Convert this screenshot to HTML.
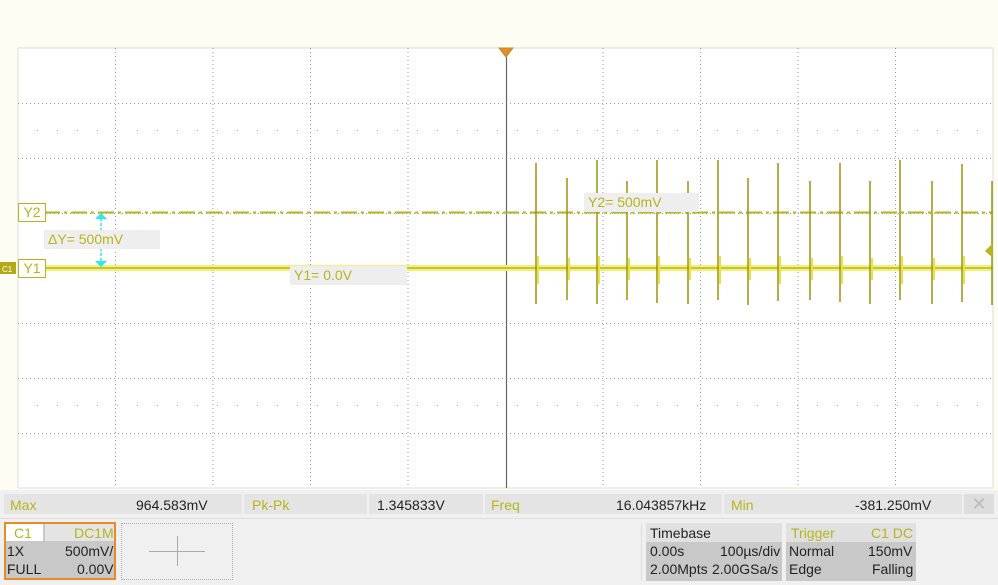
<!DOCTYPE html>
<html><head><meta charset="utf-8"><style>
body{margin:0;width:998px;height:585px;background:#fdfdf3;font-family:"Liberation Sans",sans-serif;position:relative;overflow:hidden}
.a{position:absolute;font-size:13px;line-height:16px}
.y{color:#b5b51e}
.k{color:#222}
</style></head><body>
<svg width="998" height="490" style="position:absolute;left:0;top:0">
<rect x="18" y="48" width="975" height="440" fill="#fff" stroke="#ddd"/>
<g stroke="#999" stroke-dasharray="1,3" stroke-width="1">
<path d="M115.5 48V488M213 48V488M310.5 48V488M408 48V488M603 48V488M700.5 48V488M798 48V488M895.5 48V488"/>
<path d="M18 103.5H993M18 158.5H993M18 213.5H993M18 323.5H993M18 378.5H993M18 433.5H993"/>
</g>
<g stroke="#aaa" stroke-dasharray="1,19" stroke-width="1">
<path d="M37 130.5H993M37 405.5H993"/>
</g>
<path d="M506.5 56V488" stroke="#666" stroke-width="1.2"/>
<path d="M499 48L513 48L506 57Z" fill="#e8892a" stroke="#a89a20"/>
<path d="M44 212.5H993" stroke="#b5b51e" stroke-width="2" stroke-dasharray="16,4,3,4"/>
<rect x="18" y="265" width="975" height="6" fill="#f4f07a"/>
<path d="M18 268H993" stroke="#b5b51e" stroke-width="1.5"/>
<g stroke="#9a940e" stroke-width="1.5">
<path d="M536 163V304M567 178V300M597 160V304M627 181V300M657 160V303M688 181V304M718 160V300M748 178V305M778 163V301M810 181V300M840 163V302M870 181V304M900 160V300M932 181V304M962 164V302M992 181V305"/>
</g>
<g stroke="#e8e24a" stroke-width="2">
<path d="M538 256V284M569 258V280M599 256V284M629 258V280M659 256V284M690 258V280M720 256V284M750 258V280M780 256V284M812 258V280M842 256V284M872 258V280M902 256V284M934 258V280M964 256V284"/>
</g>
<path d="M993 243L985 251L993 258Z" fill="#b5b51e"/>
<path d="M101 218V262" stroke="#2de6ef" stroke-width="1.5" stroke-dasharray="3,2"/>
<path d="M95 219H107L101 213ZM95 261H107L101 267Z" fill="#2de6ef"/>
<rect x="0" y="262" width="16" height="12" fill="#b5a814"/>
<text x="2" y="272" font-size="8" fill="#fff" font-family="Liberation Sans">C1</text>
</svg>
<div class="a y" style="left:18px;top:203px;width:26px;height:17px;border:1px solid #b5b51e;background:#fff;text-align:center;font-size:14px">Y2</div>
<div class="a y" style="left:18px;top:259px;width:26px;height:17px;border:1px solid #b5b51e;background:#fff;text-align:center;font-size:14px">Y1</div>
<div class="a y" style="left:44px;top:230px;width:116px;height:19px;background:#eee;font-size:14px;line-height:19px;padding-left:4px;box-sizing:border-box">ΔY= 500mV</div>
<div class="a y" style="left:290px;top:266px;width:117px;height:19px;background:#eee;font-size:14px;line-height:19px;padding-left:4px;box-sizing:border-box">Y1= 0.0V</div>
<div class="a y" style="left:584px;top:193px;width:115px;height:19px;background:#eee;font-size:14px;line-height:19px;padding-left:4px;box-sizing:border-box">Y2= 500mV</div>
<div style="position:absolute;left:0;top:490px;width:998px;height:95px;background:#f0f0f0"></div>
<div style="position:absolute;left:4px;top:494px;width:990px;height:20px;background:#e4e4e4"></div>
<div class="a y" style="left:10px;top:497px;font-size:14px">Max</div>
<div class="a k" style="left:136px;top:497px;font-size:14px">964.583mV</div>
<div class="a y" style="left:252px;top:497px;font-size:14px">Pk-Pk</div>
<div class="a k" style="left:377px;top:497px;font-size:14px">1.345833V</div>
<div class="a y" style="left:491px;top:497px;font-size:14px">Freq</div>
<div class="a k" style="left:616px;top:497px;font-size:14px">16.043857kHz</div>
<div class="a y" style="left:731px;top:497px;font-size:14px">Min</div>
<div class="a k" style="left:855px;top:497px;font-size:14px">-381.250mV</div>
<div style="position:absolute;left:242px;top:494px;width:2px;height:20px;background:#f0f0f0"></div>
<div style="position:absolute;left:367px;top:494px;width:2px;height:20px;background:#f0f0f0"></div>
<div style="position:absolute;left:483px;top:494px;width:2px;height:20px;background:#f0f0f0"></div>
<div style="position:absolute;left:722px;top:494px;width:2px;height:20px;background:#f0f0f0"></div>
<div style="position:absolute;left:962px;top:494px;width:2px;height:20px;background:#f0f0f0"></div>
<div style="position:absolute;left:964px;top:494px;width:30px;height:20px;background:#ddd;color:#bbb;text-align:center;font-size:18px;line-height:20px">✕</div>
<div style="position:absolute;left:0;top:518px;width:998px;height:1px;background:#ddd"></div>
<div style="position:absolute;left:4px;top:522px;width:112px;height:58px;border:2px solid #e8892a;background:#c8c8c8;box-sizing:border-box"></div>
<div style="position:absolute;left:6px;top:524px;width:37px;height:17px;background:#fff"></div>
<div style="position:absolute;left:45px;top:524px;width:69px;height:17px;background:#e4e4e4"></div>
<div class="a y" style="left:14px;top:525px;font-size:14px">C1</div>
<div class="a y" style="left:74px;top:525px;font-size:14px">DC1M</div>
<div class="a k" style="left:7px;top:543px;font-size:14px">1X</div>
<div class="a k" style="left:65px;top:543px;font-size:14px">500mV/</div>
<div class="a k" style="left:7px;top:561px;font-size:14px">FULL</div>
<div class="a k" style="left:77px;top:561px;font-size:14px">0.00V</div>
<div style="position:absolute;left:121px;top:523px;width:112px;height:57px;border:1px dotted #aaa;box-sizing:border-box"></div>
<div style="position:absolute;left:149px;top:551px;width:56px;height:1px;background:#aaa"></div>
<div style="position:absolute;left:177px;top:536px;width:1px;height:30px;background:#aaa"></div>
<div style="position:absolute;left:641px;top:523px;width:1px;height:58px;background:#ddd"></div>
<div style="position:absolute;left:646px;top:523px;width:136px;height:58px;background:#c8c8c8"></div>
<div style="position:absolute;left:646px;top:523px;width:136px;height:19px;background:#e0e0e0"></div>
<div class="a k" style="left:650px;top:525px;font-size:14px">Timebase</div>
<div class="a k" style="left:650px;top:543px;font-size:14px">0.00s</div>
<div class="a k" style="left:720px;top:543px;font-size:14px">100µs/div</div>
<div class="a k" style="left:650px;top:561px;font-size:14px">2.00Mpts</div>
<div class="a k" style="left:712px;top:561px;font-size:14px">2.00GSa/s</div>
<div style="position:absolute;left:786px;top:523px;width:130px;height:58px;background:#c8c8c8"></div>
<div style="position:absolute;left:786px;top:523px;width:130px;height:19px;background:#e0e0e0"></div>
<div class="a y" style="left:791px;top:525px;font-size:14px">Trigger</div>
<div class="a y" style="left:871px;top:525px;font-size:14px">C1 DC</div>
<div class="a k" style="left:789px;top:543px;font-size:14px">Normal</div>
<div class="a k" style="left:868px;top:543px;font-size:14px">150mV</div>
<div class="a k" style="left:789px;top:561px;font-size:14px">Edge</div>
<div class="a k" style="left:872px;top:561px;font-size:14px">Falling</div>
</body></html>
